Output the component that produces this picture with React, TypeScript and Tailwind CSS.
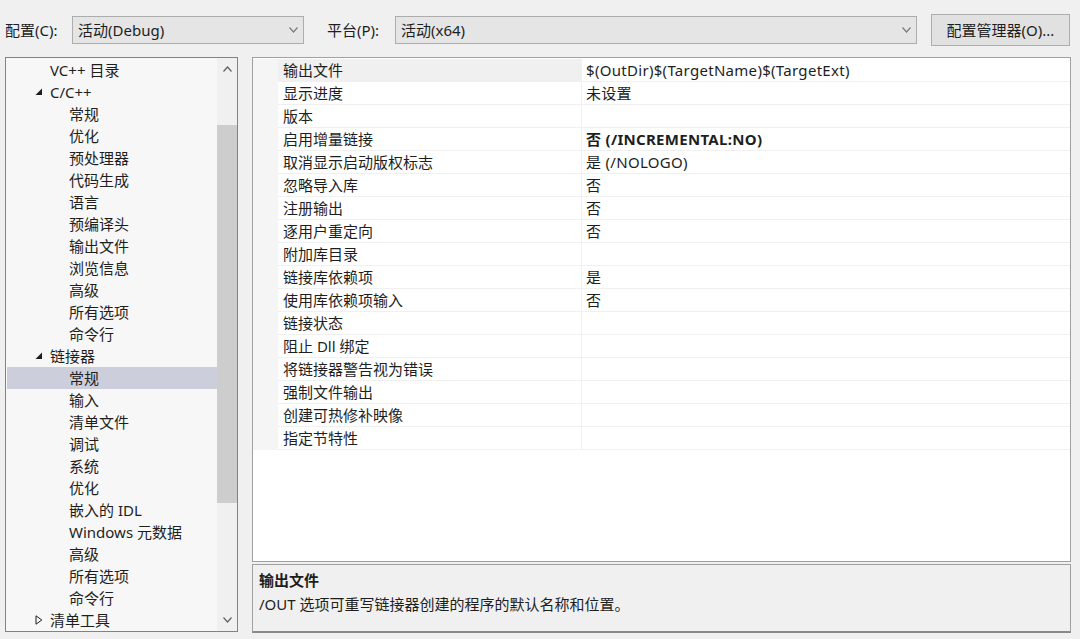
import React from "react";

const FONT = { fontFamily: '"Noto Sans", "Noto Sans CJK SC", sans-serif' };

type TreeItem = { label: string; level: 1 | 2; expand?: "open" | "closed"; selected?: boolean };

const tree: TreeItem[] = [
  { label: "VC++ 目录", level: 1 },
  { label: "C/C++", level: 1, expand: "open" },
  { label: "常规", level: 2 },
  { label: "优化", level: 2 },
  { label: "预处理器", level: 2 },
  { label: "代码生成", level: 2 },
  { label: "语言", level: 2 },
  { label: "预编译头", level: 2 },
  { label: "输出文件", level: 2 },
  { label: "浏览信息", level: 2 },
  { label: "高级", level: 2 },
  { label: "所有选项", level: 2 },
  { label: "命令行", level: 2 },
  { label: "链接器", level: 1, expand: "open" },
  { label: "常规", level: 2, selected: true },
  { label: "输入", level: 2 },
  { label: "清单文件", level: 2 },
  { label: "调试", level: 2 },
  { label: "系统", level: 2 },
  { label: "优化", level: 2 },
  { label: "嵌入的 IDL", level: 2 },
  { label: "Windows 元数据", level: 2 },
  { label: "高级", level: 2 },
  { label: "所有选项", level: 2 },
  { label: "命令行", level: 2 },
  { label: "清单工具", level: 1, expand: "closed" },
];

const props: { name: string; value: string; bold?: boolean; selected?: boolean }[] = [
  { name: "输出文件", value: "$(OutDir)$(TargetName)$(TargetExt)", selected: true },
  { name: "显示进度", value: "未设置" },
  { name: "版本", value: "" },
  { name: "启用增量链接", value: "否 (/INCREMENTAL:NO)", bold: true },
  { name: "取消显示启动版权标志", value: "是 (/NOLOGO)" },
  { name: "忽略导入库", value: "否" },
  { name: "注册输出", value: "否" },
  { name: "逐用户重定向", value: "否" },
  { name: "附加库目录", value: "" },
  { name: "链接库依赖项", value: "是" },
  { name: "使用库依赖项输入", value: "否" },
  { name: "链接状态", value: "" },
  { name: "阻止 Dll 绑定", value: "" },
  { name: "将链接器警告视为错误", value: "" },
  { name: "强制文件输出", value: "" },
  { name: "创建可热修补映像", value: "" },
  { name: "指定节特性", value: "" },
];

function Chevron({ up = false, color = "#7a7a7a" }: { up?: boolean; color?: string }) {
  return (
    <svg width="9" height="6" viewBox="0 0 9 6">
      <path d={up ? "M0.5 5.5 L4.5 1 L8.5 5.5" : "M0.5 0.5 L4.5 5 L8.5 0.5"} fill="none" stroke={color} strokeWidth="1.2" />
    </svg>
  );
}

function Combo({ text, width }: { text: string; width: string }) {
  return (
    <div className={`${width} h-[28px] flex items-center justify-between border border-[#adadad] bg-[#e5e5e5] pl-[5px] pr-[5px]`}>
      <span className="text-[15px] text-[#1e1e1e]">{text}</span>
      <Chevron />
    </div>
  );
}

export default function App() {
  return (
    <div className="w-[1080px] h-[639px] bg-[#f0f0f0] overflow-hidden text-[#1e1e1e]" style={FONT}>
      {/* Toolbar */}
      <div className="h-[57px] flex items-center pl-[5px] pr-[10px] pt-[3px]">
        <span className="text-[15px] w-[67px]">配置(C):</span>
        <Combo text="活动(Debug)" width="w-[232px]" />
        <span className="text-[15px] ml-[23px] w-[68px]">平台(P):</span>
        <Combo text="活动(x64)" width="w-[522px]" />
        <div className="ml-[14px] w-[139px] h-[32px] flex items-center justify-center border border-[#adadad] bg-[#e1e1e1] text-[15px]">
          配置管理器(O)...
        </div>
      </div>

      <div className="flex pl-[5px] gap-[14px]">
        {/* Tree */}
        <div className="w-[233px] h-[575px] border border-[#828282] bg-[#f7f7f7] flex">
          <div className="flex-1 pt-[1px] pl-[1px]">
            {tree.map((t, i) => (
              <div
                key={i}
                className={`h-[22px] flex items-center text-[15px] ${t.selected ? "bg-[#cccedb]" : ""}`}
                style={{ paddingLeft: t.level === 1 ? 28 : 62 }}
              >
                {t.level === 1 && (
                  <span className="w-[15px] flex items-center justify-start">
                    {t.expand === "open" && (
                      <svg width="8" height="8" viewBox="0 0 8 8">
                        <path d="M7 0.5 L7 7 L0.5 7 Z" fill="#1e1e1e" />
                      </svg>
                    )}
                    {t.expand === "closed" && (
                      <svg width="8" height="10" viewBox="0 0 8 10">
                        <path d="M1 0.8 L6.8 5 L1 9.2 Z" fill="none" stroke="#1e1e1e" strokeWidth="1" />
                      </svg>
                    )}
                  </span>
                )}
                <span className="leading-none">{t.label}</span>
              </div>
            ))}
          </div>
          {/* Scrollbar */}
          <div className="w-[20px] bg-[#f0f0f0] flex flex-col items-center">
            <div className="h-[22px] flex items-center justify-center">
              <Chevron up color="#606060" />
            </div>
            <div className="flex-1 w-full flex flex-col">
              <div className="h-[45px]" />
              <div className="h-[378px] w-[20px] bg-[#cdcdcd]" />
              <div className="flex-1" />
            </div>
            <div className="h-[22px] flex items-center justify-center">
              <Chevron color="#606060" />
            </div>
          </div>
        </div>

        {/* Right side */}
        <div className="w-[819px] flex flex-col gap-[2px]">
          <div className="h-[505px] border border-[#a0a0a0] bg-white pt-[1px]">
            <div className="flex">
              <div className="w-[25px] bg-[#f5f5f5]" />
              <div className="flex-1">
                {props.map((p, i) => (
                  <div key={i} className="h-[23px] flex border-b border-[#f0f0f0]">
                    <div
                      className={`w-[304px] border-r border-[#f0f0f0] flex items-center pl-[5px] text-[15px] ${p.selected ? "bg-[#f0f0f0]" : ""}`}
                    >
                      {p.name}
                    </div>
                    <div
                      className={`flex-1 flex items-center pl-[4px] text-[15px] tracking-[0.3px] ${p.bold ? "font-bold" : ""}`}
                    >
                      {p.value}
                    </div>
                  </div>
                ))}
              </div>
            </div>
          </div>
          <div className="h-[69px] border border-[#a0a0a0] border-b-[#8a8a8a] border-b-2 bg-[#f0f0f0] pl-[6px] pt-[3px]">
            <div className="text-[15px] font-bold h-[24px] flex items-center">输出文件</div>
            <div className="text-[15px] h-[24px] flex items-center">/OUT 选项可重写链接器创建的程序的默认名称和位置。</div>
          </div>
        </div>
      </div>
    </div>
  );
}
